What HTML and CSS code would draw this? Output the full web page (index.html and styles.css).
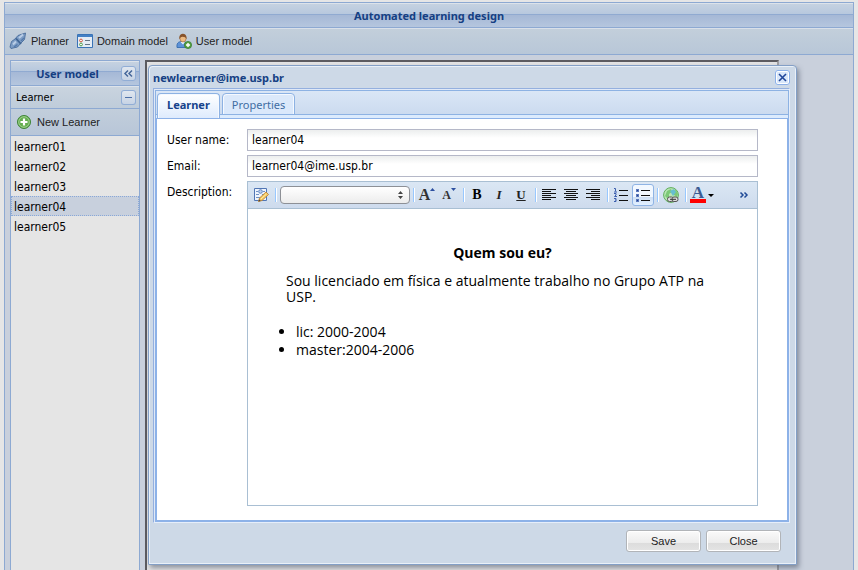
FILE: index.html
```html
<!DOCTYPE html>
<html lang="en">
<head>
<meta charset="utf-8">
<title>Automated learning design</title>
<link rel="stylesheet" href="styles.css">
</head>
<body>
<div class="app">
  <h1 class="app-title">Automated learning design</h1>
  <nav class="app-bar">
    <button type="button" class="bar-button">
      <svg width="18" height="18" viewBox="0 0 18 18" aria-hidden="true"><path d="M16.500 1L15.500 7.500 11.500 11.500 8.500 15 2 16.500 1 15 2.500 9.500 6 7 9 3.500z" fill="#7d9dc5" stroke="#486c9b" stroke-width=".9"/><path d="M7 6.500l5 5.500" stroke="#3f6493" stroke-width="1.800"/><path d="M10 6l4-3.500M4 12.500l3-3" stroke="#b9cde6" stroke-width="2"/><path d="M12 9l3-3M5 15l3.500-2.500" stroke="#5479aa" stroke-width="1.400"/></svg>
      <span>Planner</span>
    </button>
    <button type="button" class="bar-button">
      <svg width="16" height="16" viewBox="0 0 16 16" aria-hidden="true"><path fill="#e4ecf5" stroke="#3973b6" d="M.5 1.500h15v13H.5z"/><path fill="#4380c5" d="M1 2h14v2H1z"/><circle cx="4" cy="7.500" r="1.400" fill="#fff" stroke="#cf553b"/><circle cx="4" cy="11.500" r="1.400" fill="#fff" stroke="#4b9c4d"/><path d="M8 7.500h5M8 11.500h5" stroke="#667584"/></svg>
      <span>Domain model</span>
    </button>
    <button type="button" class="bar-button">
      <svg width="16" height="16" viewBox="0 0 16 16" aria-hidden="true"><path d="M1 14.500c-.5-4 1-6 5-6s6 2 6 6z" fill="#5e92d7" stroke="#2c65a9" stroke-width=".8"/><path d="M4.500 9L7 11.500 9 9z" fill="#eef4fc"/><ellipse cx="7" cy="5.500" rx="3" ry="3.500" fill="#edbb83" stroke="#a56d38" stroke-width=".6"/><path d="M3.500 6.500C1.500 -1 12 -1.500 10.500 6.500 10.300 4.500 8.500 3.800 6.500 3.800 5 3.800 4 4.500 3.500 6.500z" fill="#87532b"/><circle cx="12" cy="12" r="3.600" fill="#58a143" stroke="#327b2c" stroke-width=".7"/><path d="M12 10v4M10 12h4" stroke="#fff" stroke-width="1.400"/></svg>
      <span>User model</span>
    </button>
  </nav>
  <div class="workspace">
    <aside class="side">
      <header class="side-title">
        <h2>User model</h2>
        <button type="button" class="tool" aria-label="Collapse panel"><svg width="15" height="15" viewBox="0 0 15 15"><path d="M7 4.500L4 7.500 7 10.500M11 4.500L8 7.500 11 10.500" fill="none" stroke="#46679a" stroke-width="1.500"/></svg></button>
      </header>
      <header class="side-group">
        <h3>Learner</h3>
        <button type="button" class="tool" aria-label="Collapse group"><svg width="15" height="15" viewBox="0 0 15 15"><path d="M4 7.500h7" stroke="#4d70a8"/></svg></button>
      </header>
      <div class="side-bar">
        <button type="button" class="bar-button">
          <svg width="16" height="16" viewBox="0 0 16 16" aria-hidden="true"><circle cx="8" cy="8" r="6.500" fill="#64ad50" stroke="#3e8437"/><circle cx="8" cy="8" r="5.300" fill="none" stroke="#b1dba0" stroke-width=".8"/><path d="M8 4.500v7M4.500 8h7" stroke="#fff" stroke-width="2.200"/></svg>
          <span>New Learner</span>
        </button>
      </div>
      <ul class="learners">
        <li>learner01</li>
        <li>learner02</li>
        <li>learner03</li>
        <li class="selected">learner04</li>
        <li>learner05</li>
      </ul>
    </aside>
    <main class="stage"></main>
  </div>
</div>

<section class="dialog" role="dialog" aria-labelledby="dialog-title">
  <header class="dialog-head">
    <h2 id="dialog-title">newlearner@ime.usp.br</h2>
    <button type="button" class="tool close" aria-label="Close window"><svg width="15" height="15" viewBox="0 0 15 15"><path d="M4 4l7 7M11 4l-7 7" stroke="#21469a" stroke-width="1.600"/></svg></button>
  </header>
  <div class="tab-panel">
    <div class="tabs" role="tablist">
      <button type="button" class="tab active" role="tab" aria-selected="true">Learner</button>
      <button type="button" class="tab" role="tab" aria-selected="false">Properties</button>
    </div>
    <form class="form">
      <label for="user-name">User name:</label>
      <input class="field" id="user-name" type="text" value="learner04">
      <label for="email">Email:</label>
      <input class="field" id="email" type="text" value="learner04@ime.usp.br">
      <span class="label" id="description">Description:</span>
      <div class="editor">
        <div class="editor-bar">
          <button type="button" class="edit" aria-label="Edit note"><svg width="16" height="16" viewBox="0 0 16 16"><path d="M1.500 1.500h12v12h-12z" fill="#eef4fd" stroke="#5176b5"/><path d="M3 4.500h2m5 0h2M3 7.500h3m3 0h3M3 10.500h6" stroke="#7191c2"/><circle cx="7.500" cy="4.500" r="1.800" fill="#bdd1ee" stroke="#5f84c2"/><path d="M5.500 14.500l1-3.500 6.500-6 2.500 2.500-6.500 6z" fill="#f4c862" stroke="#bd7c29" stroke-width=".8"/><path d="M8 12l5.500-5" stroke="#fff0ad"/><path d="M5.500 14.500l.6-2.200 1.700 1.600z" fill="#554331"/></svg></button>
          <i class="sep"></i>
          <span class="picker"><select aria-label="Font"><option></option></select><svg width="5" height="8" viewBox="0 0 5 8" aria-hidden="true"><path d="M2.500 0L5 3H0zM2.500 8L0 5h5z" fill="#444"/></svg></span>
          <i class="sep"></i>
          <button type="button" class="edit glyph grow" aria-label="Grow text">A<svg width="5" height="3" viewBox="0 0 5 3"><path d="M0 3L2.500 0 5 3z" fill="#2c4fa0"/></svg></button>
          <button type="button" class="edit glyph shrink" aria-label="Shrink text">A<svg width="5" height="3" viewBox="0 0 5 3"><path d="M0 0h5L2.500 3z" fill="#2c4fa0"/></svg></button>
          <i class="sep"></i>
          <button type="button" class="edit glyph strong" aria-label="Bold"><b>B</b></button>
          <button type="button" class="edit glyph" aria-label="Italic"><em>I</em></button>
          <button type="button" class="edit glyph" aria-label="Underline"><u>U</u></button>
          <i class="sep"></i>
          <button type="button" class="edit" aria-label="Align left"><svg width="16" height="16" viewBox="0 0 16 16"><path d="M1 2.500h14M1 4.500h9M1 6.500h14M1 8.500h9M1 10.500h14M1 12.500h9" stroke="#111"/></svg></button>
          <button type="button" class="edit" aria-label="Align center"><svg width="16" height="16" viewBox="0 0 16 16"><path d="M1 2.500h14M3 4.500h10M1 6.500h14M3 8.500h10M1 10.500h14M3 12.500h10" stroke="#111"/></svg></button>
          <button type="button" class="edit" aria-label="Align right"><svg width="16" height="16" viewBox="0 0 16 16"><path d="M1 2.500h14M6 4.500h9M1 6.500h14M6 8.500h9M1 10.500h14M6 12.500h9" stroke="#111"/></svg></button>
          <i class="sep"></i>
          <button type="button" class="edit" aria-label="Numbered list"><svg width="16" height="16" viewBox="0 0 16 16"><path d="M6 3.500h9M6 8.500h9M6 13.500h9" stroke="#111"/><path d="M1 1.500h1.500v3M1 5h3M1 6.500h2v1.500L1.500 9.500H4M1 11.500h2v3H1M2 13h1" fill="none" stroke="#3c5fae"/></svg></button>
          <button type="button" class="edit pressed" aria-label="Bulleted list" aria-pressed="true"><svg width="16" height="16" viewBox="0 0 16 16"><path d="M6 3.500h9M6 8.500h9M6 13.500h9" stroke="#111"/><path d="M1 2h3v3H1zM1 7h3v3H1zM1 12h3v3H1z" fill="#5a78bb"/><path d="M2 3h1v1H2zM2 8h1v1H2zM2 13h1v1H2z" fill="#223f8c"/></svg></button>
          <i class="sep"></i>
          <button type="button" class="edit" aria-label="Insert link"><svg width="16" height="16" viewBox="0 0 16 16"><circle cx="8" cy="8" r="7.400" fill="#b9e5b5" stroke="#5fae5b"/><path d="M2 9l2-5 4-2 1 3-3 2v3l-2 1zM10 4l3-1 2 4-1 3-3-2z" fill="#7cc976"/><path d="M7 4l4-2 2 3-3 4z" fill="#67bed0"/><rect x="4.500" y="10" width="6" height="4.500" rx="2" fill="#ddd" stroke="#555"/><rect x="9" y="10" width="6" height="4.500" rx="2" fill="#ddd" stroke="#555"/><path d="M7 12.300h6" stroke="#333"/></svg></button>
          <i class="sep"></i>
          <button type="button" class="edit color" aria-label="Text color"><span class="color-letter">A</span><svg width="6" height="3" viewBox="0 0 6 3"><path d="M0 0h6L3 3z"/></svg></button>
          <button type="button" class="edit more" aria-label="More tools"><svg width="10" height="8" viewBox="0 0 10 8"><path d="M1.500 1.500L4 4 1.500 6.500M5.500 1.500L8 4 5.500 6.500" fill="none" stroke="#214b97" stroke-width="1.500"/></svg></button>
        </div>
        <div class="editor-page" contenteditable="true" role="textbox" aria-labelledby="description" spellcheck="false" lang="pt">
          <h4>Quem sou eu?</h4>
          <p>Sou licenciado em física e atualmente trabalho no Grupo ATP na USP.</p>
          <ul>
            <li>lic: 2000-2004</li>
            <li>master:2004-2006</li>
          </ul>
        </div>
      </div>
    </form>
  </div>
  <footer class="dialog-foot">
    <button type="button" class="push">Save</button>
    <button type="button" class="push">Close</button>
  </footer>
</section>
</body>
</html>
```
FILE: styles.css
```css
* { box-sizing: border-box; }

html, body { height: 100%; }

body {
  margin: 0;
  padding: 2px 4px 0;
  overflow: hidden;
  background: #e6e6e6;
  font: 12px "DejaVu Sans Condensed", "Noto Sans", sans-serif;
  color: #000;
}

h1, h2, h3, h4, p, ul { margin: 0; padding: 0; }

h1, h2 { font-family: "Noto Sans", sans-serif; }

button {
  margin: 0;
  padding: 0;
  border: 0;
  background: none;
  font: 11px "Liberation Sans", sans-serif;
  color: #222;
}

svg { display: block; flex: none; }

.app {
  display: flex;
  flex-direction: column;
  height: 100%;
  border: 1px solid #8da9d2;
  border-bottom: 0;
  background: #c9d0dc;
}

.app-title {
  height: 25px;
  border-bottom: 1px solid #8da9d2;
  box-shadow: inset 0 1px #dde3ea;
  background: linear-gradient(#c7d3e1, #b7c8de 11px, #90aad1 11px, #90aad1 12px, #a5b8d6 12px, #b5c6de);
  font-size: 11px;
  line-height: 26px;
  font-weight: bold;
  text-align: center;
  color: #153f83;
}

.app-bar {
  display: flex;
  align-items: center;
  gap: 8px;
  height: 27px;
  padding: 0 4px;
  border-bottom: 1px solid #8da9d2;
  box-shadow: inset 0 1px #d9e0e9;
  background: linear-gradient(#c3cfdb, #b8c7d8);
}

.bar-button {
  display: flex;
  align-items: center;
  gap: 4px;
}

.workspace {
  display: flex;
  flex: 1;
  gap: 5px;
  min-height: 0;
  padding: 5px 74px 0 5px;
}

.side {
  width: 130px;
  border: 1px solid #8da9d2;
  border-bottom: 0;
  background: #e5e5e5;
}

.side-title, .side-group {
  display: flex;
  align-items: center;
  justify-content: space-between;
  padding: 0 3px 0 5px;
  border-bottom: 1px solid #8da9d2;
  box-shadow: inset 0 1px #dde3ea;
}

.side-title {
  height: 25px;
  padding-left: 3px;
  background: linear-gradient(#c7d3e1, #b7c8de 10px, #90aad1 10px, #90aad1 11px, #a5b8d6 11px, #b5c6de);
}

.side-title h2 {
  flex: 1;
  font-size: 11px;
  text-align: center;
  color: #153f83;
}

.side-group {
  height: 23px;
  background: linear-gradient(#cad4df, #bfccda);
}

.side-group h3 { font-size: 11px; font-weight: normal; }

.tool {
  width: 15px;
  height: 15px;
  border-radius: 3px;
  box-shadow: inset 0 0 0 1px #91add5;
  background: linear-gradient(#e2e8f0, #c5d2e4);
}

.close {
  box-shadow: inset 0 0 0 1px #8cb0e8, inset 0 0 0 2px #fff;
  background: #d9e7fa;
}

.side-bar {
  display: flex;
  height: 27px;
  padding: 0 5px;
  border-bottom: 1px solid #8da9d2;
  background: linear-gradient(#c2cedb, #b8c6d8);
}

.side-bar .bar-button { gap: 5px; }

.learners { list-style: none; }

.learners li {
  height: 20px;
  padding: 0 2px;
  border: 1px solid transparent;
  line-height: 20px;
}

.learners .selected {
  border: 1px dotted #8aa8d8;
  background: #c8d0dd;
}

.stage {
  flex: 1;
  border: 2px solid #5c5b60;
  border-right-color: #a0a0a4;
  border-bottom: 0;
  background: #e3e3e4;
}

.dialog {
  position: absolute;
  top: 65px;
  left: 148px;
  right: 61px;
  padding: 0 6px 12px 4px;
  border: 1px solid #839fc6;
  border-radius: 4px 4px 1px 1px;
  box-shadow: inset 1px 1px #e9f0f8, inset -1px -1px #e9f0f8, 2px 3px 5px rgba(60, 70, 90, .5);
  background: #cdd9e7;
}

.dialog-head {
  display: flex;
  align-items: center;
  justify-content: space-between;
  height: 22px;
}

.dialog-head h2 { font-size: 11px; color: #153f83; }

.tab-panel {
  border: 1px solid #94b0df;
  border-right-color: #e6eefa;
  border-bottom-color: #e6eefa;
  padding: 1px 0 0 1px;
  background: #e0e9f7;
}

.tabs {
  display: flex;
  gap: 2px;
  height: 28px;
  padding: 2px 1px 0;
  border: 1px solid #8db2e3;
  border-width: 1px 1px 0;
  box-shadow: inset 0 -3px #dcebfd, inset 0 -4px #8db2e3;
  background: linear-gradient(#dae6f6, #c9d9ee);
}

.tab {
  height: 22px;
  padding: 0 9px;
  border: 1px solid #8db2e3;
  border-radius: 4px 4px 0 0;
  box-shadow: inset 1px 1px #f5f9ff, inset -1px 0 #f5f9ff;
  background: linear-gradient(#dce9fa, #dae8fb);
  font: 11px "Noto Sans", sans-serif;
  color: #416da3;
}

.tab.active {
  height: 25px;
  padding-bottom: 3px;
  border-bottom: 0;
  background: linear-gradient(#fff, #deebfd);
  font-weight: bold;
  color: #15428b;
}

.form {
  display: grid;
  grid-template-columns: 80px 1fr;
  gap: 4px 0;
  padding: 10px 29px 14px 10px;
  border: 2px solid #8db2e8;
  border-top-width: 1px;
  background: #fff;
}

.form label, .label { line-height: 22px; }

.field {
  width: 100%;
  height: 22px;
  padding: 0 4px;
  border: 1px solid #b5b8c8;
  border-radius: 0;
  background: linear-gradient(#eceeee, #fff 8px);
  font: 12px "DejaVu Sans Condensed", "Noto Sans", sans-serif;
  color: #000;
}

.editor { min-width: 0; border: 1px solid #a9bfd3; }

.editor-bar {
  display: flex;
  align-items: center;
  height: 27px;
  padding: 0 2px;
  border-bottom: 1px solid #a9bfd3;
  background: linear-gradient(#dbe7f4, #cedbed);
}

.edit {
  display: flex;
  flex: none;
  align-items: center;
  justify-content: center;
  width: 22px;
  height: 22px;
}

.pressed {
  border: 1px solid #8fb4e5;
  border-radius: 3px;
  background: linear-gradient(#f2f8ff 12px, #cfe0f5 12px, #e2f0ff);
}

.sep {
  flex: none;
  width: 2px;
  height: 14px;
  margin: 0 1px 0 3px;
  border-left: 1px solid #98c8ff;
  background: #fff;
}

.picker {
  display: grid;
  flex: none;
  align-items: center;
  width: 132px;
  padding-left: 2px;
}

.picker > * { grid-area: 1 / 1; }

.picker select {
  width: 100%;
  height: 18px;
  border: 1px solid #8d9096;
  border-radius: 4px;
  appearance: none;
  background: linear-gradient(#fff, #ececec);
}

.picker svg {
  justify-self: end;
  margin-right: 7px;
  pointer-events: none;
}

.glyph { font: bold 13px "Liberation Serif", serif; }

.glyph svg { align-self: flex-start; margin-top: 4px; }

.strong { font-size: 14px; color: #000; }

.grow { font-size: 16px; color: #333; }

.shrink { font-size: 12px; color: #333; }

.color { gap: 2px; width: 28px; }

.color-letter {
  width: 16px;
  height: 16px;
  border-bottom: 4px solid #f00;
  font: bold 17px/12px "Liberation Serif", serif;
  color: #3b5a92;
}

.more { margin-left: auto; }

.editor-page {
  height: 296px;
  padding: 36px 38px;
  font-family: "Open Sans", sans-serif;
  font-size: 14px;
  line-height: 16px;
  outline: 0;
}

.editor-page h4 {
  margin-bottom: 12px;
  font-size: 14px;
  text-align: center;
}

.editor-page ul {
  margin-top: 18px;
  padding-left: 10px;
  line-height: 18px;
}

.dialog-foot {
  display: flex;
  justify-content: flex-end;
  gap: 5px;
  padding: 7px 9px 0 0;
}

.push {
  width: 75px;
  height: 22px;
  border: 1px solid #b1b4b8;
  border-radius: 3px;
  box-shadow: inset 0 0 0 1px #fff;
  background: linear-gradient(#fafafa, #ececec 12px, #dcdcdc 12px, #e4e4e4);
}
```
